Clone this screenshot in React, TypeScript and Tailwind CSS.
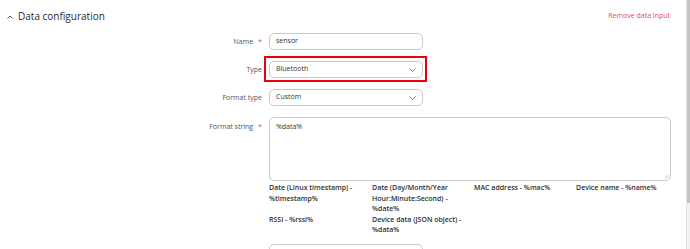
import { ReactNode } from "react";

const font = { fontFamily: '"Open Sans", "Liberation Sans", sans-serif' };

function ChevronDown() {
  return (
    <svg width="7" height="4" viewBox="0 0 7 4" fill="none" className="shrink-0">
      <polyline points="0.5,0.5 3.5,3.5 6.5,0.5" stroke="#666" strokeWidth="0.9" />
    </svg>
  );
}

function Row(props: { label: string; required?: boolean; top?: boolean; children: ReactNode }) {
  return (
    <div className={`flex ${props.top ? "items-start" : "items-center"}`}>
      <div
        className={`w-[263px] shrink-0 text-right text-[7px] leading-[17px] text-[#555] ${props.top ? "pt-[1px]" : ""}`}
      >
        {props.label}
        {props.required && <span className="text-[#e5484d] ml-[5px] pr-[1px]">*</span>}
        {!props.required && <span className="pr-[1px]"></span>}
      </div>
      <div className="ml-[6px]">{props.children}</div>
    </div>
  );
}

function Field(props: { value: string; select?: boolean }) {
  return (
    <div className="w-[154px] h-[17px] rounded-[5px] border border-[#c9c9c9] bg-white flex items-center justify-between pl-[6px] pr-[6px] text-[7px] text-[#333]">
      <span>{props.value}</span>
      {props.select && <ChevronDown />}
    </div>
  );
}

const help = [
  "Date (Linux timestamp) - %timestamp%",
  "Date (Day/Month/Year Hour:Minute:Second) - %date%",
  "MAC address - %mac%",
  "Device name - %name%",
  "RSSI - %rssi%",
  "Device data (JSON object) - %data%",
];

export default function App() {
  return (
    <div className="w-[690px] h-[249px] flex bg-white overflow-hidden" style={font}>
      <div className="flex-1 pr-[14px]">
        <div className="h-[33px] flex items-center justify-between pl-[7px]">
          <div className="flex items-center gap-[5px]">
            <svg width="6" height="4" viewBox="0 0 6 4" fill="none">
              <polyline points="0.5,3.5 3,1 5.5,3.5" stroke="#444" strokeWidth="0.9" />
            </svg>
            <span className="text-[10px] font-medium text-[#2b2b2b]">Data configuration</span>
          </div>
          <span className="text-[7px] text-[#e5484d] pb-[1px] pr-[2px]">Remove data input</span>
        </div>

        <div className="flex flex-col gap-[11px]">
          <Row label="Name" required>
            <Field value="sensor" />
          </Row>
          <Row label="Type">
            <div className="relative">
              <Field value="Bluetooth" select />
              <div className="absolute left-[-5px] right-[-4px] top-[-5px] bottom-[-4px] border-2 border-[#e8000b]"></div>
            </div>
          </Row>
          <Row label="Format type">
            <Field value="Custom" select />
          </Row>
          <Row label="Format string" required top>
            <div className="relative w-[402px] h-[64px] rounded-[5px] border border-[#c9c9c9] bg-white px-[6px] pt-[4px] text-[7px] text-[#333]">
              %data%
              <svg width="5" height="5" viewBox="0 0 5 5" className="absolute right-[1px] bottom-[1px]">
                <line x1="1" y1="4.5" x2="4.5" y2="1" stroke="#999" strokeWidth="0.6" />
                <line x1="3" y1="4.5" x2="4.5" y2="3" stroke="#999" strokeWidth="0.6" />
              </svg>
            </div>
          </Row>
        </div>

        <div className="ml-[269px] mt-[2px] grid grid-cols-[103px_102px_102px_96px] text-[7px] leading-[10.5px] font-semibold text-[#2e2e2e]">
          {help.map((h) => (
            <div key={h} className="pr-[7px]">
              {h}
            </div>
          ))}
        </div>

        <div className="ml-[269px] mt-[8px] w-[154px] h-[17px] rounded-[5px] border border-[#c9c9c9]"></div>
      </div>

      <div className="w-[5px] shrink-0 bg-[#f1f1f1] border-l border-[#e3e3e3] flex flex-col">
        <div className="h-[203px] bg-[#c4c4c4]"></div>
      </div>
    </div>
  );
}
